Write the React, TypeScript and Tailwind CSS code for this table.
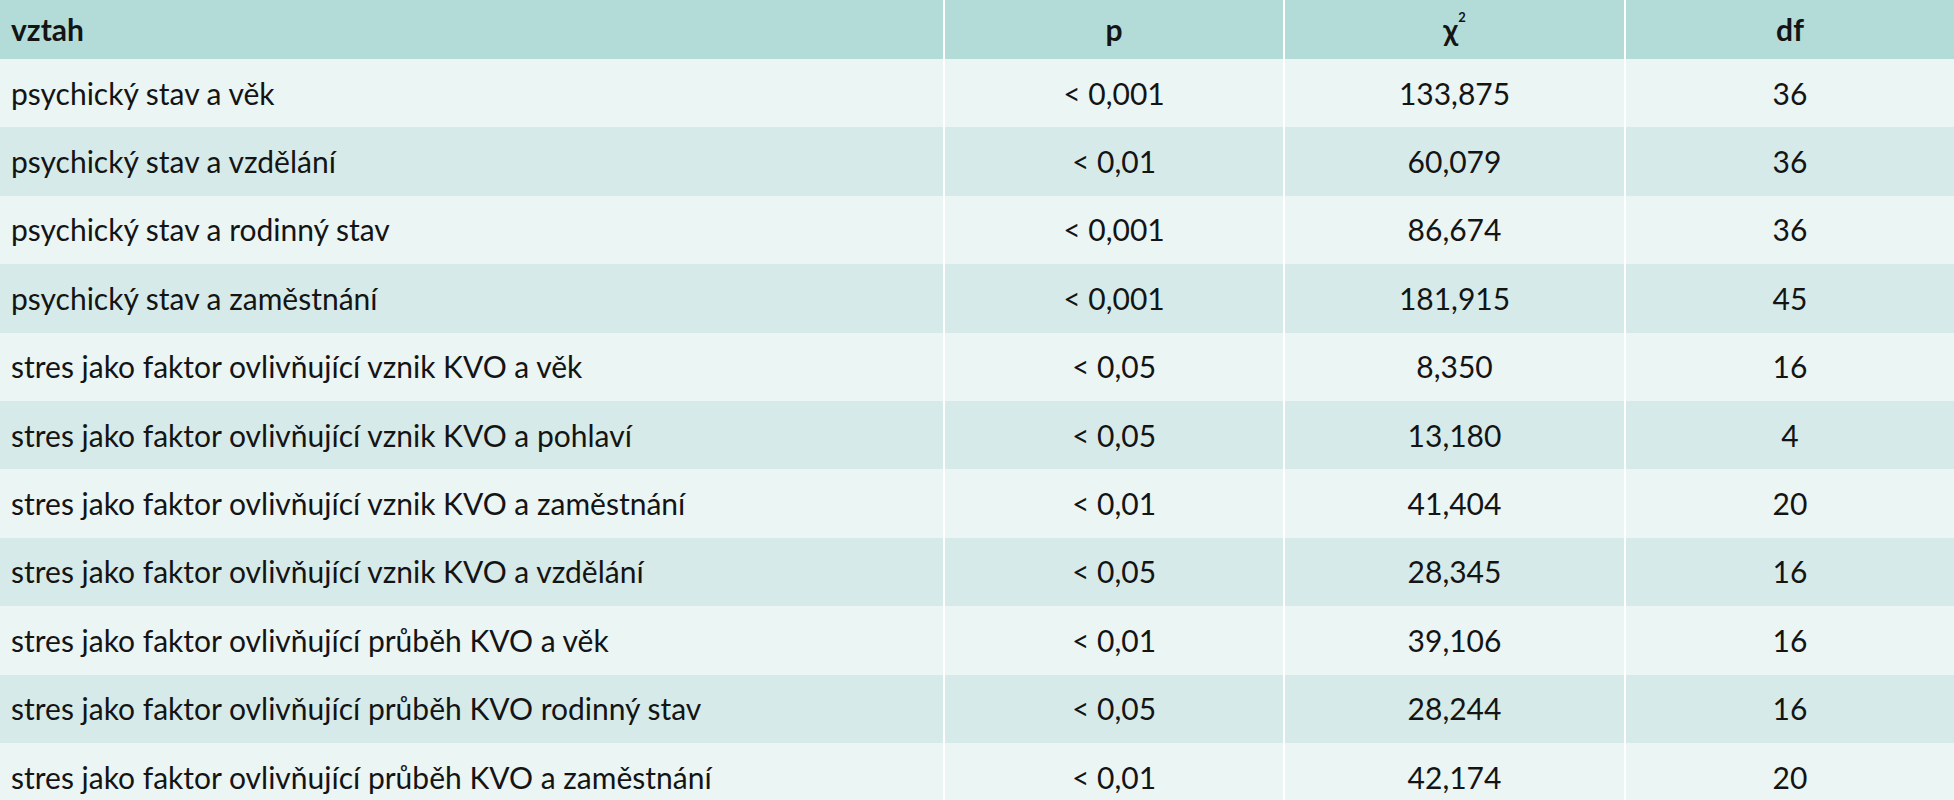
const rows: [string, string, string, string][] = [
  ['psychický stav a věk', '< 0,001', '133,875', '36'],
  ['psychický stav a vzdělání', '< 0,01', '60,079', '36'],
  ['psychický stav a rodinný stav', '< 0,001', '86,674', '36'],
  ['psychický stav a zaměstnání', '< 0,001', '181,915', '45'],
  ['stres jako faktor ovlivňující vznik KVO a věk', '< 0,05', '8,350', '16'],
  ['stres jako faktor ovlivňující vznik KVO a pohlaví', '< 0,05', '13,180', '4'],
  ['stres jako faktor ovlivňující vznik KVO a zaměstnání', '< 0,01', '41,404', '20'],
  ['stres jako faktor ovlivňující vznik KVO a vzdělání', '< 0,05', '28,345', '16'],
  ['stres jako faktor ovlivňující průběh KVO a věk', '< 0,01', '39,106', '16'],
  ['stres jako faktor ovlivňující průběh KVO rodinný stav', '< 0,05', '28,244', '16'],
  ['stres jako faktor ovlivňující průběh KVO a zaměstnání', '< 0,01', '42,174', '20'],
];

const cols = 'grid grid-cols-[943px_2px_338px_2px_339px_2px_1fr]';

const App = () => {
  return (
    <div className="w-[1954px] bg-white text-[#141414] text-[30px] font-['Lato',sans-serif]">
      <div className={`${cols} h-[59px] bg-[#b3dcd9] font-bold`}>
        <div className="flex items-center pl-[11px]">vztah</div>
        <div className="bg-white" />
        <div className="flex items-center justify-center">p</div>
        <div className="bg-white" />
        <div className="flex items-center justify-center">
          χ<sup className="text-[13px] -top-[1em]">2</sup>
        </div>
        <div className="bg-white" />
        <div className="flex items-center justify-center">df</div>
      </div>
      {rows.map((r, i) => (
        <div
          key={i}
          className={`${cols} h-[68.4px] ${i % 2 === 0 ? 'bg-[#eaf5f4]' : 'bg-[#d6ebe9]'}`}
        >
          <div className="flex items-center pl-[11px]">{r[0]}</div>
          <div className="bg-white" />
          <div className="flex items-center justify-center">{r[1]}</div>
          <div className="bg-white" />
          <div className="flex items-center justify-center">{r[2]}</div>
          <div className="bg-white" />
          <div className="flex items-center justify-center">{r[3]}</div>
        </div>
      ))}
    </div>
  );
};

export default App;
